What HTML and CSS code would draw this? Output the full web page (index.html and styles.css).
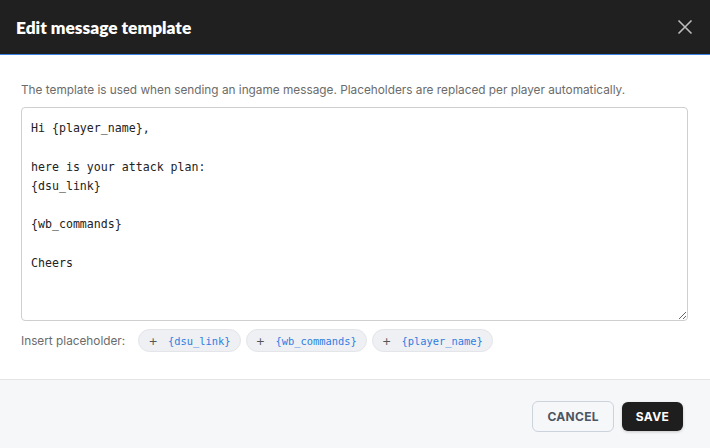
FILE: index.html
```html
<!DOCTYPE html>
<html lang="en">
<head>
  <meta charset="UTF-8">
  <title>Edit message template</title>
  <link rel="stylesheet" href="styles.css">
</head>
<body>

  <div class="dialog">
    <div class="dialog-header">
      <h2>Edit message template</h2>
      <button class="close-btn" aria-label="Close">
        <svg width="16" height="16" viewBox="0 0 16 16">
          <path d="M1.5 1.5 L14.5 14.5 M14.5 1.5 L1.5 14.5" stroke="#bdbdbd" stroke-width="1.6" fill="none"/>
        </svg>
      </button>
    </div>

    <div class="dialog-body">
      <p class="hint">The template is used when sending an ingame message. Placeholders are replaced per player automatically.</p>
      <textarea id="template" class="template-input" spellcheck="false">Hi {player_name},

here is your attack plan:
{dsu_link}

{wb_commands}

Cheers</textarea>

      <div class="placeholders">
        <span class="label">Insert placeholder:</span>
        <button class="chip"><span class="plus">+</span>{dsu_link}</button>
        <button class="chip"><span class="plus">+</span>{wb_commands}</button>
        <button class="chip"><span class="plus">+</span>{player_name}</button>
      </div>
    </div>

    <div class="dialog-footer">
      <button class="btn-outline">CANCEL</button>
      <button class="btn-dark">SAVE</button>
    </div>
  </div>

</body>
</html>
```

FILE: styles.css
```css
body {
  margin: 0;
  background-color: #ffffff;
  font-family: Inter, "Noto Sans", sans-serif;
}

.dialog {
  width: 710px;
  height: 448px;
  display: flex;
  flex-direction: column;
}

.dialog-header {
  height: 54px;
  background-color: #202020;
  border-bottom: 1px solid #3b82e0;
  display: flex;
  align-items: center;
  justify-content: space-between;
  padding: 0 16px;
}

.dialog-header h2 {
  margin: 0;
  color: #ffffff;
  font-family: Lato, sans-serif;
  font-weight: 800;
  font-size: 17.3px;
}

.close-btn {
  background: none;
  border: none;
  padding: 0;
  margin-right: 1px;
  display: flex;
  cursor: pointer;
}

.dialog-body {
  flex: 1;
  padding: 28px 21px 0 21px;
}

.hint {
  margin: 0 0 10px 0;
  font-size: 11.8px;
  color: #6b6b6b;
}

.template-input {
  display: block;
  box-sizing: border-box;
  width: 667px;
  height: 214px;
  margin: 0;
  padding: 11px 9px;
  border: 1px solid #cfcfcf;
  border-radius: 4px;
  font-family: "DejaVu Sans Mono", monospace;
  font-size: 11.6px;
  line-height: 19.3px;
  color: #222222;
  resize: vertical;
  outline: none;
}

.placeholders {
  display: flex;
  align-items: center;
  gap: 5px;
  margin-top: 8px;
}

.label {
  font-size: 11.8px;
  color: #6b6b6b;
  margin-right: 8px;
}

.chip {
  height: 23px;
  padding: 0 9px 0 9px;
  border: 1px solid #e3e5e9;
  border-radius: 12px;
  background-color: #eef0f3;
  color: #2f7de1;
  font-family: "DejaVu Sans Mono", monospace;
  font-size: 10.4px;
  display: flex;
  align-items: center;
  cursor: pointer;
}

.plus {
  color: #555555;
  font-family: Inter, sans-serif;
  font-size: 15px;
  font-weight: 300;
  margin-right: 10px;
}

.dialog-footer {
  height: 69px;
  box-sizing: border-box;
  background-color: #f6f7f9;
  border-top: 1px solid #e4e4e4;
  display: flex;
  align-items: center;
  justify-content: flex-end;
  gap: 8px;
  padding: 4px 27px 0 0;
}

.dialog-footer button {
  font-family: Inter, sans-serif;
  font-size: 12px;
  font-weight: 700;
  letter-spacing: 0.3px;
  border-radius: 6px;
  cursor: pointer;
}

.btn-outline {
  height: 31px;
  padding: 0 14px;
  background-color: transparent;
  border: 1px solid #cdd3dc;
  color: #4b5563;
}

.btn-dark {
  height: 29px;
  padding: 0 14px;
  background-color: #1e1e1e;
  border: none;
  color: #ffffff;
  box-shadow: 0 1px 3px rgba(0,0,0,0.2);
}
```
